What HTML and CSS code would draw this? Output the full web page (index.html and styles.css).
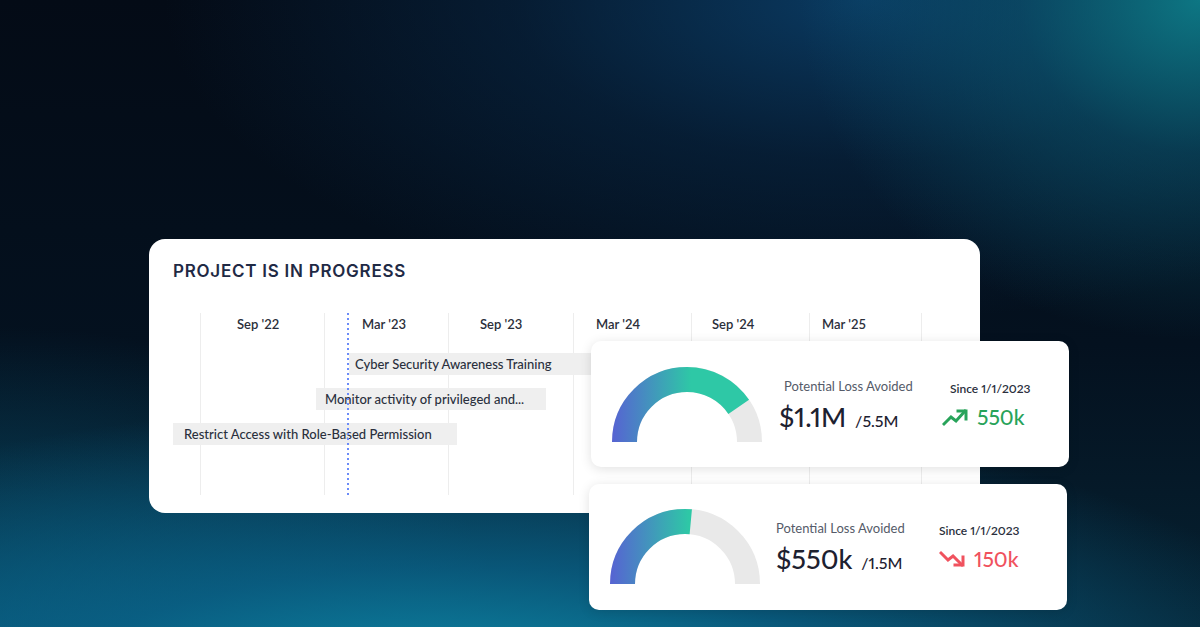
FILE: index.html
```html
<!DOCTYPE html>
<html lang="en">
<head>
    <meta charset="UTF-8">
    <meta name="viewport" content="width=device-width, initial-scale=1.0">
    <title>Project Progress</title>
    <link rel="stylesheet" href="styles.css">
</head>
<body>
    <div class="stage">
        <section class="project-card">
            <h2 class="project-title">PROJECT IS IN PROGRESS</h2>

            <div class="timeline">
                <div class="tl-line c1"></div>
                <div class="tl-line c2"></div>
                <div class="tl-line c3"></div>
                <div class="tl-line c4"></div>
                <div class="tl-line c5"></div>
                <div class="tl-line c6"></div>
                <div class="tl-line c7"></div>

                <div class="tl-label c1" style="margin-left:37px">Sep '22</div>
                <div class="tl-label c2" style="margin-left:38px">Mar '23</div>
                <div class="tl-label c3" style="margin-left:32px">Sep '23</div>
                <div class="tl-label c4" style="margin-left:23px">Mar '24</div>
                <div class="tl-label c5" style="margin-left:21px">Sep '24</div>
                <div class="tl-label c6" style="margin-left:13px">Mar '25</div>

                <div class="tl-task row1" style="margin-left:176px;width:260px">Cyber Security Awareness Training</div>
                <div class="tl-task row2" style="margin-left:143px;width:230px">Monitor activity of privileged and...</div>
                <div class="tl-task row3" style="margin-left:0;width:284px">Restrict Access with Role-Based Permission</div>

                <div class="tl-today" style="margin-left:174px"></div>
            </div>
        </section>

        <div class="metric-stack">
            <div class="metric-card">
                <svg class="gauge" width="152" height="76" viewBox="0 0 152 76">
                    <defs>
                        <linearGradient id="g1" gradientUnits="userSpaceOnUse" x1="2" y1="0" x2="80" y2="0">
                            <stop offset="0" stop-color="#5664d2"/>
                            <stop offset="1" stop-color="#2ec8a6"/>
                        </linearGradient>
                    </defs>
                    <path d="M13.5 75 A62.5 62.5 0 0 1 138.5 75" fill="none" stroke="#e9e9e9" stroke-width="25"/>
                    <path d="M13.5 75 A62.5 62.5 0 0 1 138.5 75" fill="none" stroke="url(#g1)" stroke-width="25" pathLength="100" stroke-dasharray="81 100"/>
                </svg>
                <div class="metric-main">
                    <div class="metric-label">Potential Loss Avoided</div>
                    <div class="metric-value">$1.1M <span class="metric-total">/5.5M</span></div>
                </div>
                <div class="metric-delta">
                    <div class="metric-since">Since 1/1/2023</div>
                    <div class="delta up">
                        <svg width="26" height="20" viewBox="0 0 26 20" fill="none" stroke="currentColor" stroke-width="3" stroke-linecap="square" stroke-linejoin="miter">
                            <polyline points="2,17 9,10 14,14 23,4"/>
                            <polyline points="16,4 24,4 24,12"/>
                        </svg>
                        550k
                    </div>
                </div>
            </div>

            <div class="metric-card shifted">
                <svg class="gauge" width="152" height="76" viewBox="0 0 152 76">
                    <defs>
                        <linearGradient id="g2" gradientUnits="userSpaceOnUse" x1="2" y1="0" x2="80" y2="0">
                            <stop offset="0" stop-color="#5664d2"/>
                            <stop offset="1" stop-color="#2ec8a6"/>
                        </linearGradient>
                    </defs>
                    <path d="M13.5 75 A62.5 62.5 0 0 1 138.5 75" fill="none" stroke="#e9e9e9" stroke-width="25"/>
                    <path d="M13.5 75 A62.5 62.5 0 0 1 138.5 75" fill="none" stroke="url(#g2)" stroke-width="25" pathLength="100" stroke-dasharray="53 100"/>
                </svg>
                <div class="metric-main">
                    <div class="metric-label">Potential Loss Avoided</div>
                    <div class="metric-value">$550k <span class="metric-total">/1.5M</span></div>
                </div>
                <div class="metric-delta">
                    <div class="metric-since">Since 1/1/2023</div>
                    <div class="delta down">
                        <svg width="26" height="20" viewBox="0 0 26 20" fill="none" stroke="currentColor" stroke-width="3" stroke-linecap="square" stroke-linejoin="miter">
                            <polyline points="2,4 9,11 14,7 23,16"/>
                            <polyline points="16,16 24,16 24,8"/>
                        </svg>
                        150k
                    </div>
                </div>
            </div>
        </div>
    </div>
</body>
</html>
```

FILE: styles.css
```css
* {
    margin: 0;
    padding: 0;
    box-sizing: border-box;
}

html, body {
    height: 100%;
}

body {
    font-family: 'Lato', 'Open Sans', sans-serif;
    color: #262b38;
    overflow: hidden;
    background:
        radial-gradient(ellipse 400px 340px at 100% 0%, rgba(14, 128, 140, 0.9) 0%, rgba(12, 100, 125, 0.45) 45%, rgba(8, 60, 90, 0) 100%),
        radial-gradient(ellipse 700px 320px at 72% 0%, rgba(11, 66, 110, 0.85) 0%, rgba(9, 48, 84, 0.45) 50%, rgba(6, 20, 40, 0) 100%),
        radial-gradient(ellipse 900px 300px at 38% 112%, rgba(14, 146, 176, 1) 0%, rgba(10, 105, 145, 0.75) 45%, rgba(6, 50, 80, 0) 100%),
        radial-gradient(ellipse 500px 300px at 0% 100%, rgba(8, 80, 110, 0.85) 0%, rgba(6, 40, 60, 0) 100%),
        linear-gradient(180deg, #040b16 0%, #04111f 55%, #062232 100%);
}

.stage {
    position: relative;
    width: 920px;
    margin-left: 149px;
    padding-top: 239px;
}

/* project timeline card */

.project-card {
    width: 831px;
    height: 274px;
    background: #fff;
    border-radius: 16px;
    padding: 22px 24px 0 24px;
}

.project-title {
    font-family: 'Inter', 'Noto Sans', sans-serif;
    font-size: 17px;
    line-height: 20px;
    font-weight: 600;
    letter-spacing: 0.75px;
    color: #1f2a45;
    margin-bottom: 32px;
}

.timeline {
    display: grid;
    grid-template-columns: 27px 124px 124px 125px 118px 118px 112px 1fr;
    grid-template-rows: 40px 35px 35px 72px;
}

.tl-line {
    grid-row: 1 / -1;
    border-left: 1px solid #ededed;
}

.c1 { grid-column: 2; }
.c2 { grid-column: 3; }
.c3 { grid-column: 4; }
.c4 { grid-column: 5; }
.c5 { grid-column: 6; }
.c6 { grid-column: 7; }
.c7 { grid-column: 8; }

.tl-label {
    grid-row: 1;
    font-size: 13px;
    font-weight: 600;
    color: #2b2f3a;
    line-height: 22px;
    white-space: nowrap;
}

.tl-task {
    grid-column: 1 / -1;
    height: 22px;
    background: #efefef;
    font-size: 13px;
    font-weight: 500;
    color: #2a2f3d;
    line-height: 22px;
    white-space: nowrap;
    overflow: hidden;
}

.row1 { grid-row: 2; padding-left: 6px; }
.row2 { grid-row: 3; padding-left: 9px; }
.row3 { grid-row: 4; padding-left: 11px; align-self: start; }

.tl-today {
    grid-column: 1 / -1;
    grid-row: 1 / -1;
    width: 2px;
    background: repeating-linear-gradient(180deg, #6b8bf8 0 2px, transparent 2px 5px);
    z-index: 1;
}

/* metric cards */

.metric-stack {
    position: absolute;
    left: 442px;
    top: 341px;
    display: flex;
    flex-direction: column;
    gap: 17px;
}

.metric-card {
    width: 478px;
    height: 126px;
    background: #fff;
    border-radius: 10px;
    box-shadow: 0 2px 12px rgba(0, 0, 0, 0.12);
    display: flex;
    align-items: center;
    padding: 2px 20px 0 20px;
    font-variant-numeric: proportional-nums;
}

.metric-card.shifted {
    margin-left: -2px;
    padding-top: 0;
}

.gauge {
    flex-shrink: 0;
}

.metric-main {
    margin-left: 16px;
    width: 160px;
}

.metric-label {
    font-size: 13px;
    color: #555b69;
    padding-left: 5px;
    margin-bottom: 6px;
}

.metric-value {
    font-size: 27px;
    color: #1d2130;
    font-weight: 500;
    white-space: nowrap;
}

.metric-total {
    font-size: 16px;
    margin-left: 2px;
}

.metric-delta {
    margin-left: 3px;
}

.metric-since {
    font-size: 12px;
    font-weight: 600;
    color: #2a2f3d;
    padding-left: 8px;
    margin-bottom: 8px;
}

.shifted .metric-main {
    margin-left: 15px;
}

.shifted .metric-label {
    padding-left: 0;
}

.shifted .metric-since {
    padding-left: 0;
}

.shifted .metric-value {
    margin-top: 2px;
}

.shifted .delta {
    margin-top: 3px;
}

.delta {
    display: flex;
    align-items: center;
    gap: 9px;
    font-size: 21px;
    font-weight: 500;
}

.delta.up {
    color: #28a35a;
}

.delta.down {
    color: #f0525e;
}
```
